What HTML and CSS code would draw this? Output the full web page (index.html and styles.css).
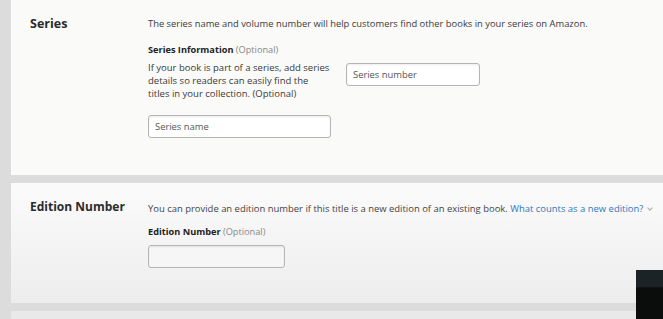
FILE: index.html
```html
<!DOCTYPE html>
<html lang="en">
<head>
    <meta charset="UTF-8">
    <title>Series and Edition</title>
    <link rel="stylesheet" href="styles.css">
</head>
<body>
<div class="page">
    <div class="card card-series">
        <h2 class="card-title">Series</h2>
        <div class="card-body">
            <p class="intro">The series name and volume number will help customers find other books in your series on Amazon.</p>
            <div class="field-label">Series Information <span class="optional">(Optional)</span></div>
            <div class="series-row">
                <p class="help">If your book is part of a series, add series details so readers can easily find the<br>titles in your collection. (Optional)</p>
                <div class="input input-number">Series number</div>
            </div>
            <div class="input input-name">Series name</div>
        </div>
    </div>
    <div class="card card-edition">
        <h2 class="card-title">Edition Number</h2>
        <div class="card-body">
            <p class="intro intro-edition">You can provide an edition number if this title is a new edition of an existing book. <a href="javascript:;" class="link">What counts as a new edition?</a><span class="chevron"></span></p>
            <div class="field-label label-edition">Edition Number <span class="optional">(Optional)</span></div>
            <div class="input input-edition"></div>
        </div>
    </div>
    <div class="card card-next"></div>
</div>
<div class="video-box"></div>
</body>
</html>
```

FILE: styles.css
```css
*{
    margin: 0;
    padding: 0;
    box-sizing: border-box;
}
body {
    width: 663px;
    height: 319px;
    overflow: hidden;
    background: #dcdcdc;
    font-family: "Open Sans", "Liberation Sans", sans-serif;
    color: #333;
    position: relative;
}
.page {
    padding-left: 11px;
    display: flex;
    flex-direction: column;
    gap: 8px;
}
.card {
    display: flex;
    background: #fafaf8;
    padding-left: 19px;
    padding-top: 16px;
}
.card-series {
    height: 175px;
}
.card-edition {
    height: 120px;
    background: linear-gradient(#fbfbfb, #ededed);
}
.card-next {
    height: 20px;
    background: #e9e9e9;
}
.card-title {
    width: 118px;
    font-size: 12.5px;
    line-height: 16px;
    font-weight: bold;
    color: #2b2b2b;
}
.card-edition .card-title {
    font-size: 12px;
}
.card-body {
    flex: 1;
    padding-top: 2px;
}
.card-edition .card-body {
    padding-top: 4px;
}
.intro {
    font-size: 9.4px;
    line-height: 12px;
    color: #3a3a3a;
}
.intro-edition {
    font-size: 9.45px;
    color: #444;
}
.link {
    color: #2f78bd;
    text-decoration: none;
}
.chevron {
    display: inline-block;
    width: 4px;
    height: 4px;
    border-right: 1px solid #aaa;
    border-bottom: 1px solid #aaa;
    transform: rotate(45deg);
    margin: 0 0 2px 5px;
}
.field-label {
    margin-top: 14px;
    font-size: 9.2px;
    line-height: 12px;
    font-weight: bold;
    color: #222;
}
.label-edition {
    margin-top: 11px;
}
.optional {
    font-weight: normal;
    color: #888;
}
.series-row {
    display: flex;
    gap: 13px;
    margin-top: 5px;
}
.help {
    width: 185px;
    font-size: 9.5px;
    line-height: 13px;
    color: #3a3a3a;
}
.input {
    height: 23px;
    border: 1px solid #b5b5b5;
    border-radius: 3px;
    background: #fff;
    box-shadow: inset 0 1px 2px rgba(0,0,0,.08);
    font-size: 9.4px;
    line-height: 21px;
    padding-left: 6px;
    color: #555;
}
.input-number {
    width: 134px;
    margin-top: 2px;
}
.input-name {
    width: 183px;
    margin-top: 15px;
}
.input-edition {
    width: 137px;
    margin-top: 7px;
    background: #f6f6f6;
}
.video-box {
    position: absolute;
    left: 636px;
    top: 270px;
    width: 27px;
    height: 49px;
    background: linear-gradient(#1c2327 0, #1c2327 35%, #0b0c0c 36%, #0b0c0c 100%);
}
```
